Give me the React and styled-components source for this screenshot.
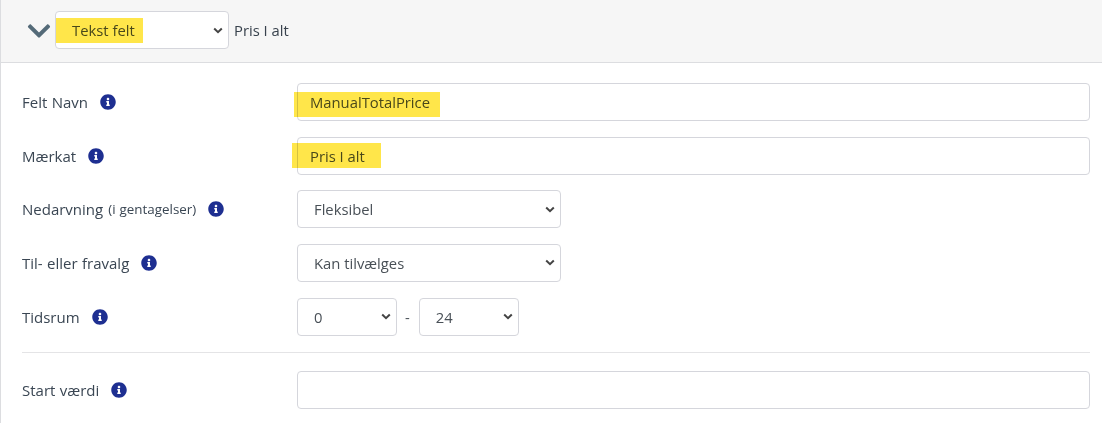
import React from "react";
import styled, { createGlobalStyle } from "styled-components";
import { FaChevronDown, FaInfoCircle } from "react-icons/fa";

const GlobalStyle = createGlobalStyle`
  html, body {
    margin: 0;
    background: #fff;
    overflow: hidden;
  }
  body {
    font-family: "Open Sans", "Noto Sans", sans-serif;
    font-size: 14.8px;
    color: #3b4652;
  }
`;

const Panel = styled.div`
  width: 1102px;
  height: 423px;
  box-sizing: border-box;
  border-left: 1px solid #dcdde0;
  overflow: hidden;
`;

const Header = styled.div`
  height: 60px;
  box-sizing: content-box;
  padding: 0 0 2px 25px;
  background: #f6f6f6;
  border-bottom: 1px solid #dcdde0;
  display: flex;
  align-items: center;
`;

const Toggle = styled(FaChevronDown)`
  width: 26px;
  height: 26px;
  color: #546a78;
  margin: 2px 3px 0 0;
`;

const Title = styled.span`
  margin-left: 5px;
  color: #38424d;
`;

const Body = styled.div`
  padding: 20px 12px 0 21px;
`;

const Row = styled.div`
  display: grid;
  grid-template-columns: 275px 1fr;
  align-items: center;
  height: 38px;
  margin-bottom: 15.67px;
`;

const Label = styled.label`
  display: flex;
  align-items: center;
  font-size: 15px;
  word-spacing: 0.5px;
  color: #3a4653;
`;

const Hint = styled.small`
  font-size: 13.4px;
  margin-left: 5px;
`;

const Info = styled(FaInfoCircle)`
  width: 16px;
  height: 16px;
  color: #1e2f91;
  margin-left: 12px;
`;

const Field = styled.div`
  position: relative;
  display: flex;
  align-items: center;
  gap: 8px;
`;

const TextInput = styled.input`
  width: 100%;
  height: 38px;
  box-sizing: border-box;
  padding: 0 12px;
  border: 1px solid #d5d6dc;
  border-radius: 4px;
  font: inherit;
  color: #495057;
  background: #fff;
`;

const Select = styled.select`
  appearance: none;
  width: ${({ $width }) => $width}px;
  height: 38px;
  box-sizing: border-box;
  padding: 0 20px 0 16px;
  border: 1px solid #d5d6dc;
  border-radius: 4px;
  font: inherit;
  color: #495057;
  background: #fff url("data:image/svg+xml,%3Csvg xmlns='http://www.w3.org/2000/svg' width='10' height='7' viewBox='0 0 10 7'%3E%3Cpath d='M1.2 1.5 5 5.2 8.8 1.5' fill='none' stroke='%23444' stroke-width='2'/%3E%3C/svg%3E") no-repeat right 5px center;
`;

const Highlight = styled.span`
  position: absolute;
  left: ${({ $left }) => $left}px;
  top: ${({ $top }) => $top}px;
  width: ${({ $width }) => $width}px;
  height: 25px;
  background: #ffe64a;
  mix-blend-mode: multiply;
  pointer-events: none;
`;

const Dash = styled.span`
  margin-right: 1px;
  color: #495057;
`;

const Divider = styled.hr`
  border: 0;
  border-top: 1px solid #e4e4e6;
  margin: 16.4px 0 18px;
`;

const InfoLabel = ({ children, hint }) => (
  <Label>
    {children}
    {hint && <Hint>{hint}</Hint>}
    <Info />
  </Label>
);

const App = () => (
  <>
    <GlobalStyle />
    <Panel>
      <Header>
        <Toggle />
        <Field>
          <Select $width={174} defaultValue="Tekst felt">
            <option>Tekst felt</option>
          </Select>
          <Highlight $left={1} $top={7} $width={87} />
        </Field>
        <Title>Pris I alt</Title>
      </Header>
      <Body>
        <Row>
          <InfoLabel>Felt Navn</InfoLabel>
          <Field>
            <TextInput defaultValue="ManualTotalPrice" />
            <Highlight $left={-3} $top={9} $width={146} />
          </Field>
        </Row>
        <Row>
          <InfoLabel>Mærkat</InfoLabel>
          <Field>
            <TextInput defaultValue="Pris I alt" />
            <Highlight $left={-5} $top={6} $width={89} />
          </Field>
        </Row>
        <Row>
          <InfoLabel hint="(i gentagelser)">Nedarvning</InfoLabel>
          <Field>
            <Select $width={264} defaultValue="Fleksibel">
              <option>Fleksibel</option>
            </Select>
          </Field>
        </Row>
        <Row>
          <InfoLabel>Til- eller fravalg</InfoLabel>
          <Field>
            <Select $width={264} defaultValue="Kan tilvælges">
              <option>Kan tilvælges</option>
            </Select>
          </Field>
        </Row>
        <Row>
          <InfoLabel>Tidsrum</InfoLabel>
          <Field>
            <Select $width={100} defaultValue="0">
              <option>0</option>
            </Select>
            <Dash>-</Dash>
            <Select $width={100} defaultValue="24">
              <option>24</option>
            </Select>
          </Field>
        </Row>
        <Divider />
        <Row>
          <InfoLabel>Start værdi</InfoLabel>
          <Field>
            <TextInput />
          </Field>
        </Row>
      </Body>
    </Panel>
  </>
);

export default App;
